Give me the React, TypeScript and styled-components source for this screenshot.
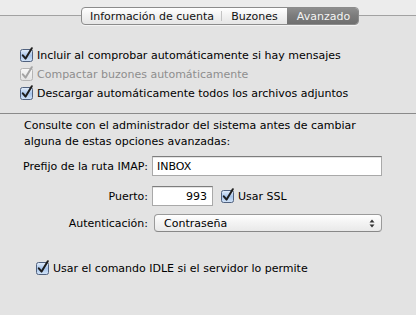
import React from "react";
import styled, { createGlobalStyle } from "styled-components";

const GlobalStyle = createGlobalStyle`
  html, body { margin: 0; padding: 0; }
  body {
    background: #ececec;
    font-family: "DejaVu Sans", "Liberation Sans", sans-serif;
    font-size: 11px;
    color: #000;
  }
`;

const Window = styled.div`
  width: 416px;
  height: 315px;
  overflow: hidden;
  display: flex;
  flex-direction: column;
  background: #ececec;
`;

const TopGap = styled.div`
  height: 15px;
  flex: none;
`;

const Panel = styled.div`
  flex: 1;
  border-top: 1px solid #a2a2a2;
  background: #e3e3e3;
  display: flex;
  flex-direction: column;
`;

const TabStrip = styled.div`
  margin: -9px 0 0 81px;
  height: 18px;
  width: 278px;
  display: flex;
  box-sizing: border-box;
  border: 1px solid #8c8c8c;
  border-radius: 4px;
  overflow: hidden;
  background: linear-gradient(#ffffff, #f1f1f1 50%, #e6e6e6);
  box-shadow: 0 1px 0 rgba(255, 255, 255, 0.6);
`;

const Tab = styled.div<{ $w: number; $active?: boolean; $divider?: boolean }>`
  width: ${(p) => p.$w}px;
  flex: none;
  display: flex;
  align-items: center;
  justify-content: center;
  color: ${(p) => (p.$active ? "#f4f4f4" : "#111")};
  background: ${(p) =>
    p.$active ? "linear-gradient(#8e8e8e, #7b7b7b 50%, #6f6f6f)" : "transparent"};
  position: relative;
  &::after {
    content: "";
    display: ${(p) => (p.$divider ? "block" : "none")};
    position: absolute;
    right: 0;
    top: 3px;
    bottom: 3px;
    width: 1px;
    background: #c4c4c4;
  }
`;

const CheckList = styled.div`
  margin-top: 21px;
  display: flex;
  flex-direction: column;
`;

const CheckRow = styled.label<{ $indent: number; $disabled?: boolean }>`
  height: 19px;
  display: flex;
  align-items: center;
  gap: 4px;
  padding-left: ${(p) => p.$indent}px;
  color: ${(p) => (p.$disabled ? "#8e8e8e" : "#000")};
  white-space: nowrap;
`;

const Separator = styled.div`
  margin-top: 10px;
  height: 1px;
  background: #8a8a8a;
  flex: none;
`;

const Notice = styled.p`
  margin: 4px 0 0 24px;
  line-height: 16px;
`;

const Form = styled.div`
  display: grid;
  grid-template-columns: 148px 1fr;
  column-gap: 4px;
  padding-right: 34px;
`;

const Label = styled.div<{ $top: number }>`
  margin-top: ${(p) => p.$top}px;
  text-align: right;
  align-self: center;
  white-space: nowrap;
`;

const Cell = styled.div<{ $top: number }>`
  margin-top: ${(p) => p.$top}px;
  display: flex;
  align-items: center;
  gap: 8px;
`;

const TextField = styled.div<{ $w?: number; $align?: "left" | "right" }>`
  box-sizing: border-box;
  height: 20px;
  width: ${(p) => (p.$w ? `${p.$w}px` : "100%")};
  background: #fff;
  border: 1px solid #a9a9a9;
  border-top-color: #7d7d7d;
  box-shadow: inset 0 1px 0 #e4e4e4;
  display: flex;
  align-items: center;
  justify-content: ${(p) => (p.$align === "right" ? "flex-end" : "flex-start")};
  padding: 0 5px 0 4px;
`;

const InlineCheck = styled.label`
  display: flex;
  align-items: center;
  gap: 4px;
  white-space: nowrap;
`;

const Popup = styled.div`
  box-sizing: border-box;
  margin-left: 2px;
  height: 18px;
  width: 100%;
  border: 1px solid #9a9a9a;
  border-bottom-color: #888;
  border-radius: 4px;
  background: linear-gradient(#ffffff, #f3f3f3 50%, #e9e9e9);
  display: flex;
  align-items: center;
  justify-content: space-between;
  padding: 0 6px 0 9px;
`;

const IdleList = styled.div`
  margin-top: 27px;
`;

const Checkbox: React.FC<{ disabled?: boolean }> = ({ disabled }) => {
  const id = disabled ? "cbg-d" : "cbg";
  return (
    <svg width="13" height="13" viewBox="0 0 13 13" style={{ flex: "none", overflow: "visible" }}>
      <defs>
        <linearGradient id={id} x1="0" y1="0" x2="0" y2="1">
          {disabled ? (
            <>
              <stop offset="0" stopColor="#f8f8f8" />
              <stop offset="1" stopColor="#e2e2e2" />
            </>
          ) : (
            <>
              <stop offset="0" stopColor="#e6effa" />
              <stop offset="0.5" stopColor="#a9c6ec" />
              <stop offset="1" stopColor="#d2e3f7" />
            </>
          )}
        </linearGradient>
      </defs>
      <rect
        x="0.5"
        y="0.5"
        width="12"
        height="12"
        rx="2"
        fill={`url(#${id})`}
        stroke={disabled ? "#b4b4b4" : "#50617e"}
      />
      <path
        d="M2.8 6.3 L5.6 9.6 L11.8 -0.8"
        fill="none"
        stroke={disabled ? "#a4a4a4" : "#1d1d1d"}
        strokeWidth="2"
        strokeLinecap="round"
        strokeLinejoin="round"
      />
    </svg>
  );
};

const Stepper: React.FC = () => (
  <svg width="6" height="9" viewBox="0 0 6 9">
    <path d="M3 0.5 L5.5 3.5 L0.5 3.5 Z" fill="#333" />
    <path d="M3 8.5 L5.5 5.5 L0.5 5.5 Z" fill="#333" />
  </svg>
);

export default function App() {
  return (
    <>
      <GlobalStyle />
      <Window>
        <TopGap />
        <Panel>
          <TabStrip>
            <Tab $w={140} $divider>Información de cuenta</Tab>
            <Tab $w={65}>Buzones</Tab>
            <Tab $w={73} $active>Avanzado</Tab>
          </TabStrip>

          <CheckList>
            <CheckRow $indent={20}>
              <Checkbox />
              Incluir al comprobar automáticamente si hay mensajes
            </CheckRow>
            <CheckRow $indent={20} $disabled>
              <Checkbox disabled />
              Compactar buzones automáticamente
            </CheckRow>
            <CheckRow $indent={20}>
              <Checkbox />
              Descargar automáticamente todos los archivos adjuntos
            </CheckRow>
          </CheckList>

          <Separator />

          <Notice>
            Consulte con el administrador del sistema antes de cambiar
            <br />
            alguna de estas opciones avanzadas:
          </Notice>

          <Form>
            <Label $top={6}>Prefijo de la ruta IMAP:</Label>
            <Cell $top={6}>
              <TextField>INBOX</TextField>
            </Cell>

            <Label $top={10}>Puerto:</Label>
            <Cell $top={10}>
              <TextField $w={61} $align="right">993</TextField>
              <InlineCheck>
                <Checkbox />
                Usar SSL
              </InlineCheck>
            </Cell>

            <Label $top={8}>Autenticación:</Label>
            <Cell $top={8}>
              <Popup>
                Contraseña
                <Stepper />
              </Popup>
            </Cell>
          </Form>

          <IdleList>
            <CheckRow $indent={36}>
              <Checkbox />
              Usar el comando IDLE si el servidor lo permite
            </CheckRow>
          </IdleList>
        </Panel>
      </Window>
    </>
  );
}
